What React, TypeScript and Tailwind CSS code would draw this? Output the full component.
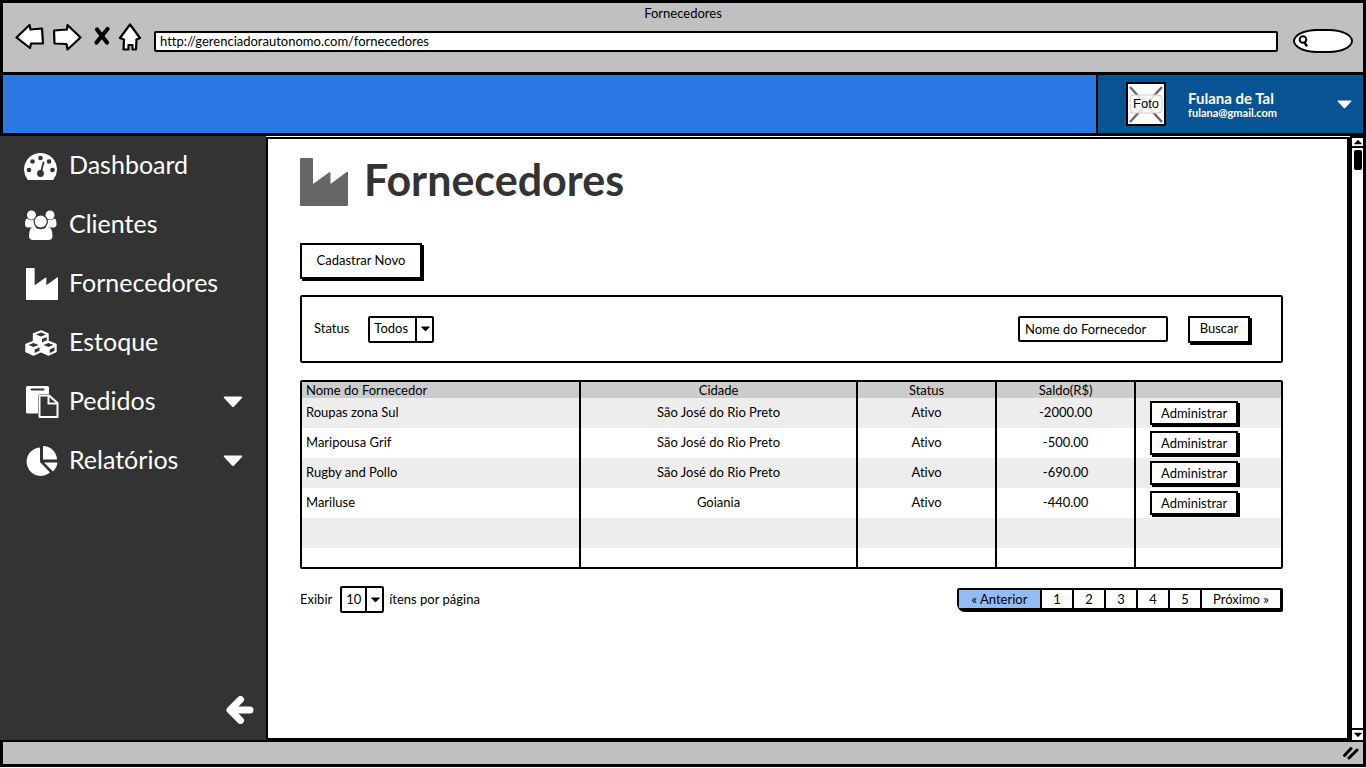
import type { ReactNode } from "react";

type IconProps = { className?: string };

const suppliers = [
  { name: "Roupas zona Sul", city: "São José do Rio Preto", status: "Ativo", balance: "-2000.00" },
  { name: "Maripousa Grif", city: "São José do Rio Preto", status: "Ativo", balance: "-500.00" },
  { name: "Rugby and Pollo", city: "São José do Rio Preto", status: "Ativo", balance: "-690.00" },
  { name: "Mariluse", city: "Goiania", status: "Ativo", balance: "-440.00" },
];

function GaugeIcon() {
  return (
    <svg viewBox="0 0 34 28" className="h-7 w-[34px]" aria-hidden="true">
      <path d="M3.500 27.500Q0 22.500 0 17.500A16.500 16.500 0 0 1 33 17.500Q33 22.500 29.500 27.500Q29 28 28 28H5Q4 28 3.500 27.500Z" fill="#fff" />
      <g fill="#333">
        <circle cx="5" cy="18" r="2.300" />
        <circle cx="8.500" cy="9.500" r="2.300" />
        <circle cx="16.500" cy="6" r="2.300" />
        <circle cx="25" cy="9.500" r="2.300" />
        <circle cx="28.500" cy="18" r="2.300" />
        <circle cx="16.500" cy="21.500" r="3.400" />
      </g>
      <path d="M17 20L19.500 10.500" stroke="#333" strokeWidth="1.800" strokeLinecap="round" />
    </svg>
  );
}

function PeopleIcon() {
  return (
    <svg viewBox="0 0 34 30" className="h-[30px] w-[34px]" aria-hidden="true">
      <g fill="#fff">
        <circle cx="7.500" cy="5" r="4.500" />
        <circle cx="26" cy="5" r="4.500" />
        <path d="M3 8.500Q7 11 10 9.500Q9.500 14 12 17.500H4Q1 17.500 1 14Q1 9 3 8.500Z" />
        <path d="M30.500 8.500Q26.500 11 23.500 9.500Q24 14 21.500 17.500H29.500Q32.500 17.500 32.500 14Q32.500 9 30.500 8.500Z" />
        <path d="M10.500 17Q16.500 21.500 23 17Q28.500 16.500 28.500 26Q28.500 30 24.500 30H9Q5 30 5 26Q5 16.500 10.500 17Z" />
      </g>
      <circle cx="16.700" cy="11.500" r="6.600" fill="#fff" stroke="#333" strokeWidth="1.200" />
    </svg>
  );
}

function FactoryIcon({ className }: IconProps) {
  return (
    <svg viewBox="0 0 48 48" className={className} aria-hidden="true">
      <path d="M1 0H12Q13 0 13 1V26L29 14.500Q30.500 13.500 30.500 15V26L46 14.500Q48 13 48 15V47Q48 48 47 48H1Q0 48 0 47V1Q0 0 1 0Z" fill="currentColor" />
    </svg>
  );
}

function CubesIcon() {
  return (
    <svg viewBox="0 0 32 26" className="ml-px h-[26px] w-8" aria-hidden="true">
      <g fill="#fff" stroke="#fff" strokeWidth="1.400" strokeLinejoin="round">
        <path d="M8.500 4L16 1L23 4V11L16 14.500L8.500 11Z" />
        <path d="M1 14.500L8.500 11.500L16 14.500V21.500L8.500 25L1 21.500Z" />
        <path d="M16 14.500L23.500 11.500L31 14.500V21.500L23.500 25L16 21.500Z" />
      </g>
      <g fill="#333">
        <path d="M11 4.500L16 2.500L21 4.500L16 6.500ZM17 9L21.700 6.900V10.300L17 12.500Z" />
        <path d="M3.500 15L8.500 13L13.500 15L8.500 17ZM9.700 19.500L14.500 17.300V20.800L9.700 23Z" />
        <path d="M18.500 15L23.500 13L28.500 15L23.500 17ZM24.700 19.500L29.500 17.300V20.800L24.700 23Z" />
      </g>
    </svg>
  );
}

function PasteIcon() {
  return (
    <svg viewBox="0 0 34 34" className="ml-0.5 h-[34px] w-[34px]" aria-hidden="true">
      <path d="M1.500 1H21.500Q23 1 23 2.500V9H15Q12 9 12 12V28.500H1.500Q0 28.500 0 27V2.500Q0 1 1.500 1Z" fill="#fff" />
      <path d="M5.500 4.500H17.500" stroke="#333" strokeWidth="2" strokeLinecap="round" />
      <path d="M13.500 10.500H23L31.500 18V32H13.500V10.500Z" fill="#333" stroke="#fff" strokeWidth="2" strokeLinejoin="round" />
      <path d="M22.500 11V18.500H31" fill="none" stroke="#fff" strokeWidth="2" />
    </svg>
  );
}

function PieIcon() {
  return (
    <svg viewBox="0 0 32 32" className="ml-0.5 h-8 w-8" aria-hidden="true">
      <g fill="#fff">
        <path d="M14 2.500V17L24 27.500A14.200 14.200 0 1 1 14 2.500Z" />
        <path d="M17 1A14 14 0 0 1 31 14.500H17Z" />
        <path d="M18 17.500H31.500Q31 22.500 27 26.500Z" />
      </g>
    </svg>
  );
}

function Caret({ className }: IconProps) {
  return (
    <svg viewBox="0 0 20 12" className={className} aria-hidden="true">
      <path d="M1.500 .500H18.500Q20 .500 19 2L11 10.500Q10 11.500 9 10.500L1 2Q0 .500 1.500 .500Z" fill="currentColor" />
    </svg>
  );
}

function SketchButton({ children, className }: { children: ReactNode; className: string }) {
  return (
    <button
      type="button"
      className={`border-2 border-black bg-white text-center shadow-[2px_2px_0_#000] ${className}`}
    >
      {children}
    </button>
  );
}

function SketchSelect({ id, value, className }: { id: string; value: string; className: string }) {
  return (
    <span className="relative inline-flex">
      <select
        id={id}
        className={`h-[27px] appearance-none rounded-xs border-2 border-black bg-white pl-1 ${className}`}
      >
        <option>{value}</option>
      </select>
      <span className="pointer-events-none absolute inset-y-0 right-0 flex w-[19px] items-center justify-center border-l-2 border-black">
        <Caret className="h-1.5 w-[9px]" />
      </span>
    </span>
  );
}

function BrowserBar() {
  return (
    <header className="border-3 border-black bg-[#c0c0c0] pb-[19px]">
      <h1 className="pt-0.5 text-center leading-4">Fornecedores</h1>
      <div className="flex items-center pt-0.5 pr-2.5 pl-3">
        <button type="button" aria-label="Voltar">
          <svg viewBox="0 0 30 30" className="h-[30px] w-[30px]">
            <path d="M1.500 14.500L14.500 2L15.500 6.500L27 5.500L28 20.500L16 20.500L15 25Z" fill="#fff" stroke="#000" strokeWidth="2.200" strokeLinejoin="round" />
          </svg>
        </button>
        <button type="button" aria-label="Avançar" className="ml-[7px]">
          <svg viewBox="0 0 30 30" className="h-[30px] w-[30px]">
            <path d="M28.500 14.500L15.500 2L15 6.500L2 7.500L2.500 20.500L14.500 21L15.500 26.500Z" fill="#fff" stroke="#000" strokeWidth="2.200" strokeLinejoin="round" />
          </svg>
        </button>
        <button type="button" aria-label="Parar" className="ml-2.5">
          <svg viewBox="0 0 20 30" className="h-[30px] w-5">
            <path d="M5 6.500L15 19.500M15.500 6L4.500 19.500" fill="none" stroke="#000" strokeWidth="4.200" strokeLinecap="round" />
          </svg>
        </button>
        <button type="button" aria-label="Página inicial" className="ml-[6px]">
          <svg viewBox="0 0 24 30" className="h-[30px] w-6">
            <path d="M12 1.500L22 15L18.500 16.500L18 26.500L14.500 26.500V22H10.500V26.500L5.500 26.500L6 16.500L2 15Z" fill="#fff" stroke="#000" strokeWidth="2.200" strokeLinejoin="round" />
          </svg>
        </button>
        <input
          aria-label="Endereço"
          defaultValue="http://gerenciadorautonomo.com/fornecedores"
          className="mt-1.5 ml-3 h-[21px] min-w-0 flex-1 rounded-xs border-2 border-black bg-white px-1"
        />
        <label className="mt-1.5 ml-[15px] flex h-6 w-[60px] items-center rounded-[40%/50%] border-2 border-black bg-white pl-0.5">
          <svg viewBox="0 0 12 12" className="h-3 w-3 shrink-0" aria-hidden="true">
            <circle cx="6" cy="4.500" r="3.300" fill="none" stroke="#000" strokeWidth="2" />
            <path d="M7.500 7.500L9.500 10.500" stroke="#000" strokeWidth="2.400" strokeLinecap="round" />
          </svg>
          <input aria-label="Pesquisar" className="w-9 min-w-0 bg-transparent" />
        </label>
      </div>
    </header>
  );
}

function UserBar() {
  return (
    <div className="flex justify-end border-x-3 border-b-3 border-black bg-[#2b78e4]">
      <button type="button" className="flex w-[267px] items-center border-l-2 border-black bg-[#085394] py-[7px] pr-[11px] pl-7 text-left text-white">
        <span className="relative flex h-11 w-10 items-center justify-center border-2 border-black bg-white text-black">
          <svg viewBox="0 0 36 40" className="absolute inset-0 h-full w-full" aria-hidden="true">
            <path d="M2 3L34 38M34 3L2 38" stroke="#666" strokeWidth="2.400" />
            <rect x="2" y="11" width="32" height="18" rx="4" fill="#fff" fillOpacity=".8" stroke="#ccc" />
          </svg>
          <span className="relative font-['Liberation_Sans',sans-serif] text-[13px]">Foto</span>
        </span>
        <span className="ml-[22px] flex-1">
          <span className="block text-[15px] leading-[17px] font-bold">Fulana de Tal</span>
          <span className="block text-[11px] leading-3 font-bold">fulana@gmail.com</span>
        </span>
        <Caret className="h-[9px] w-[15px]" />
      </button>
    </div>
  );
}

function NavItem({ icon, label, expandable }: { icon: ReactNode; label: string; expandable?: boolean }) {
  return (
    <li>
      <a href="#" className="flex h-[59px] items-center">
        <span className="flex w-[45px] items-center">{icon}</span>
        <span className="flex-1 pb-1 text-[25px] leading-8">{label}</span>
        {expandable && <Caret className="h-3 w-5" />}
      </a>
    </li>
  );
}

function Sidebar() {
  return (
    <nav className="flex w-[266px] shrink-0 flex-col justify-between bg-[#333] text-white">
      <ul className="pr-[23px] pl-6">
        <NavItem icon={<GaugeIcon />} label="Dashboard" />
        <NavItem icon={<PeopleIcon />} label="Clientes" />
        <NavItem icon={<FactoryIcon className="ml-0.5 h-8 w-8" />} label="Fornecedores" />
        <NavItem icon={<CubesIcon />} label="Estoque" />
        <NavItem icon={<PasteIcon />} label="Pedidos" expandable />
        <NavItem icon={<PieIcon />} label="Relatórios" expandable />
      </ul>
      <button type="button" aria-label="Recolher menu" className="mr-3 mb-4 self-end">
        <svg viewBox="0 0 28 28" className="h-7 w-7">
          <path d="M14.500 3.500L4 14L14.500 24.500M5 14H24" fill="none" stroke="#fff" strokeWidth="7" strokeLinejoin="round" strokeLinecap="round" />
        </svg>
      </button>
    </nav>
  );
}

function Filters() {
  return (
    <form className="mt-4 flex h-[68px] items-center rounded-xs border-2 border-black pr-[31px] pl-3">
      <label htmlFor="status" className="mr-[19px]">Status</label>
      <SketchSelect id="status" value="Todos" className="w-[66px]" />
      <input
        aria-label="Nome do Fornecedor"
        defaultValue="Nome do Fornecedor"
        className="mr-5 ml-auto h-[26px] w-[150px] rounded-xs border-2 border-black px-[5px]"
      />
      <SketchButton className="h-[27px] w-[62px]">Buscar</SketchButton>
    </form>
  );
}

function SupplierTable() {
  return (
    <div className="mt-[17px] rounded-xs border-2 border-black">
      <table className="w-full table-fixed border-collapse text-center">
        <colgroup>
          <col className="w-[28.4%]" />
          <col className="w-[28.3%]" />
          <col className="w-[14.2%]" />
          <col className="w-[14.2%]" />
          <col />
        </colgroup>
        <thead>
          <tr className="h-4 divide-x-2 divide-black bg-[#ccc] leading-4">
            <th className="pl-1 text-left font-normal">Nome do Fornecedor</th>
            <th className="font-normal">Cidade</th>
            <th className="font-normal">Status</th>
            <th className="font-normal">Saldo(R$)</th>
            <td />
          </tr>
        </thead>
        <tbody>
          {suppliers.map((s) => (
            <tr key={s.name} className="h-[30px] divide-x-2 divide-black odd:bg-[#ededed]">
              <td className="pl-1 text-left">{s.name}</td>
              <td>{s.city}</td>
              <td>{s.status}</td>
              <td>{s.balance}</td>
              <td className="pl-3.5 text-left">
                <SketchButton className="block h-6 w-[88px] leading-5">Administrar</SketchButton>
              </td>
            </tr>
          ))}
          <tr className="h-[30px] divide-x-2 divide-black bg-[#ededed]">
            <td /><td /><td /><td /><td />
          </tr>
          <tr className="h-[19px] divide-x-2 divide-black">
            <td /><td /><td /><td /><td />
          </tr>
        </tbody>
      </table>
    </div>
  );
}

function Pager() {
  return (
    <div className="mt-[17px] flex items-center justify-between">
      <div className="flex items-center">
        <label htmlFor="page-size" className="mr-2">Exibir</label>
        <SketchSelect id="page-size" value="10" className="w-11" />
        <span className="ml-[5px]">ítens por página</span>
      </div>
      <nav aria-label="Paginação" className="flex h-6 divide-x-2 divide-black rounded-xs rounded-bl-lg border-2 border-r-3 border-b-4 border-black">
        <button type="button" className="w-[83px] bg-[#94bbf2]">« Anterior</button>
        {["1", "2", "3", "4", "5"].map((n) => (
          <button type="button" key={n} className="w-8">{n}</button>
        ))}
        <button type="button" className="w-[78px]">Próximo »</button>
      </nav>
    </div>
  );
}

function ScrollTrack() {
  return (
    <div className="flex w-4 shrink-0 flex-col items-center border-r-3 border-l-2 border-black bg-white" aria-hidden="true">
      <span className="flex h-3 w-full items-center justify-center border-t-2 border-b-2 border-black">
        <Caret className="h-1.5 w-2 rotate-180" />
      </span>
      <span className="mt-0.5 h-5 w-2 rounded-xs bg-black" />
      <span className="mt-auto flex h-3 w-full items-center justify-center border-t-2 border-black">
        <Caret className="h-1.5 w-2" />
      </span>
    </div>
  );
}

export default function App() {
  return (
    <div className="flex min-h-screen flex-col bg-white pb-px font-[Lato,'Noto_Sans',sans-serif] text-[13px] text-black [font-variant-ligatures:none]">
      <BrowserBar />
      <UserBar />
      <div className="flex flex-1">
        <Sidebar />
        <main className="mt-px min-w-0 flex-1 border-2 border-r-3 border-black bg-white pt-[19px] pr-16 pl-8">
          <div className="flex items-center gap-4">
            <FactoryIcon className="h-12 w-12 text-[#666]" />
            <h2 className="pb-1 text-[43px] leading-[44px] font-bold text-[#333]">Fornecedores</h2>
          </div>
          <SketchButton className="mt-[37px] block h-9 w-[122px]">Cadastrar Novo</SketchButton>
          <Filters />
          <SupplierTable />
          <Pager />
        </main>
        <ScrollTrack />
      </div>
      <footer className="flex h-[27px] items-center justify-end border-3 border-t-2 border-black bg-[#c0c0c0] pr-1">
        <svg viewBox="0 0 16 14" className="h-3.5 w-4" aria-hidden="true">
          <path d="M1.500 9.500L8 2.500M6 12L14 4" stroke="#000" strokeWidth="3" strokeLinecap="round" />
        </svg>
      </footer>
    </div>
  );
}
